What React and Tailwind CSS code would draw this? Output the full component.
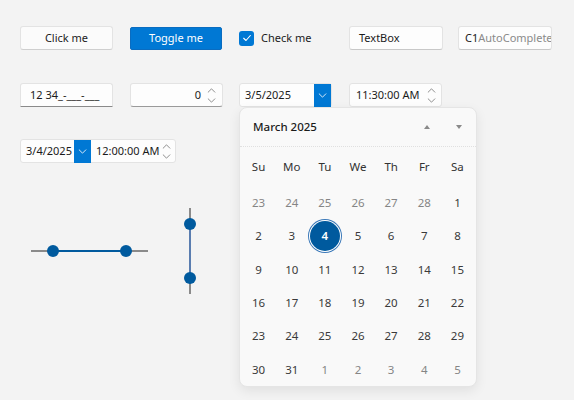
import React from 'react';

const font = "font-['Segoe_UI','Noto_Sans',sans-serif]";

function ChevronDown({ className = '' }) {
  return (
    <svg viewBox="0 0 10 6" className={className} fill="none" stroke="currentColor" strokeWidth="1" strokeLinecap="round" strokeLinejoin="round">
      <path d="M1 1 L5 5 L9 1" />
    </svg>
  );
}

function Spinner() {
  return (
    <div className="flex flex-col items-center justify-center gap-[5px] text-[#7a7a7a]">
      <svg viewBox="0 0 10 6" className="w-[9px] h-[5px]" fill="none" stroke="currentColor" strokeWidth="1" strokeLinecap="round">
        <path d="M1 5 L5 1 L9 5" />
      </svg>
      <svg viewBox="0 0 10 6" className="w-[9px] h-[5px]" fill="none" stroke="currentColor" strokeWidth="1" strokeLinecap="round">
        <path d="M1 1 L5 5 L9 1" />
      </svg>
    </div>
  );
}

const weeks = [
  [[23, 0], [24, 0], [25, 0], [26, 0], [27, 0], [28, 0], [1, 1]],
  [[2, 1], [3, 1], [4, 2], [5, 1], [6, 1], [7, 1], [8, 1]],
  [[9, 1], [10, 1], [11, 1], [12, 1], [13, 1], [14, 1], [15, 1]],
  [[16, 1], [17, 1], [18, 1], [19, 1], [20, 1], [21, 1], [22, 1]],
  [[23, 1], [24, 1], [25, 1], [26, 1], [27, 1], [28, 1], [29, 1]],
  [[30, 1], [31, 1], [1, 0], [2, 0], [3, 0], [4, 0], [5, 0]],
];

function Calendar() {
  return (
    <div className="absolute left-0 top-[24px] w-[238px] rounded-lg border border-[#e5e5e5] bg-[#f9f9f9] shadow-[0_4px_12px_rgba(0,0,0,0.08)] z-10">
      <div className="h-[39px] flex items-center pl-[13px] pr-[14px] border-b border-dotted border-[#e0e0e0]">
        <span className="text-[11.5px] font-medium text-[#1b1b1b]">March 2025</span>
        <div className="ml-auto flex items-center gap-[26px]">
          <span className="w-0 h-0 border-x-[3.5px] border-x-transparent border-b-[4px] border-b-[#8a8a8a]" />
          <span className="w-0 h-0 border-x-[3.5px] border-x-transparent border-t-[4px] border-t-[#8a8a8a]" />
        </div>
      </div>
      <div className="pl-[2px] pr-[2px]">
        <div className="grid grid-cols-7 h-[39px] items-center text-[11.5px] text-[#333]">
          {['Su', 'Mo', 'Tu', 'We', 'Th', 'Fr', 'Sa'].map((d) => (
            <span key={d} className="text-center">{d}</span>
          ))}
        </div>
        {weeks.map((w, i) => (
          <div key={i} className="grid grid-cols-7 h-[33.3px] items-center text-[11.5px]">
            {w.map(([n, t], j) => (
              <div key={j} className="flex justify-center">
                {t === 2 ? (
                  <span className="w-[30px] h-[30px] rounded-full bg-[#005a9e] text-white font-semibold flex items-center justify-center shadow-[0_0_0_1px_#ffffff,0_0_0_2px_#3a78b8]">{n}</span>
                ) : (
                  <span className={t === 1 ? 'text-[#3a3a3a]' : 'text-[#858585]'}>{n}</span>
                )}
              </div>
            ))}
          </div>
        ))}
      </div>
    </div>
  );
}

export default function App() {
  const box = 'h-[24px] bg-[#fdfdfd] border border-[#e3e3e3] rounded-[3px] flex items-center text-[11px] text-[#1b1b1b] whitespace-nowrap';
  return (
    <div className={`${font} w-[574px] h-[400px] bg-[#f3f3f3] overflow-hidden pl-[20px] pt-[26px] relative`}>
      {/* row 1 */}
      <div className="flex items-center h-[24px]">
        <button className="w-[93px] h-[24px] bg-[#fbfbfb] border border-[#e3e3e3] border-b-[#cfcfcf] rounded-[3px] text-[11px] text-[#1b1b1b]">Click me</button>
        <button className="ml-[17px] w-[92px] h-[23px] bg-[#0078d4] border border-[#0a6cc0] rounded-[2px] text-[11px] text-white">Toggle me</button>
        <label className="ml-[17px] flex items-center gap-[7px] text-[11px] text-[#1b1b1b] w-[93px]">
          <span className="w-[15px] h-[15px] rounded-[3px] bg-[#0078d4] flex items-center justify-center">
            <svg viewBox="0 0 12 12" className="w-[10px] h-[10px]" fill="none" stroke="white" strokeWidth="1.3" strokeLinecap="round" strokeLinejoin="round">
              <path d="M2 6.3 L4.8 9 L10 3" />
            </svg>
          </span>
          Check me
        </label>
        <div className={`${box} ml-[17px] w-[94px] px-[9px] border-b-[#c8c8c8]`}>TextBox</div>
        <div className={`${box} ml-[15px] w-[94px] pl-[6px] border-b-[#c8c8c8] overflow-hidden`}>
          C1<span className="text-[#8a8a8a]">AutoComplete</span>
        </div>
      </div>

      {/* row 2 */}
      <div className="flex items-center h-[24px] mt-[33px]">
        <div className={`${box} w-[93px] pl-[9px] border-b-[#8a8a8a] rounded-b-none`}>12 34_-___-___</div>
        <div className={`${box} ml-[17px] w-[93px] pr-[6px] justify-end gap-[6px] border-b-[#9a9a9a] border-b-dotted`}>
          <span>0</span>
          <Spinner />
        </div>
        <div className="relative ml-[16px]">
          <div className={`${box} w-[93px] pl-[5px] pr-0`}>
            <span>3/5/2025</span>
            <span className="ml-auto w-[17px] h-[23px] bg-[#0078d4] flex items-center justify-center text-white">
              <ChevronDown className="w-[9px] h-[5px]" />
            </span>
          </div>
          <Calendar />
        </div>
        <div className={`${box} ml-[17px] w-[93px] pl-[6px] pr-[5px]`}>
          <span>11:30:00 AM</span>
          <span className="ml-auto"><Spinner /></span>
        </div>
      </div>

      {/* row 3 */}
      <div className="flex items-center h-[24px] mt-[32px]">
        <div className={`${box} w-[156px] pl-[5px] pr-[4px]`}>
          <span>3/4/2025</span>
          <span className="ml-[2px] w-[17px] h-[23px] bg-[#0078d4] flex items-center justify-center text-white">
            <ChevronDown className="w-[9px] h-[5px]" />
          </span>
          <span className="ml-[5px]">12:00:00 AM</span>
          <span className="ml-auto"><Spinner /></span>
        </div>
      </div>

      {/* sliders */}
      <div className="flex items-center mt-[45px] h-[86px]">
        <div className="relative ml-[11px] w-[117px] h-[12px] flex items-center">
          <div className="w-full h-[2px] bg-[#8a8a8a]" />
          <div className="absolute left-[22px] w-[73px] h-[2px] bg-[#005a9e]" />
          <span className="absolute left-[16px] w-[12px] h-[12px] rounded-full bg-[#005a9e]" />
          <span className="absolute left-[89px] w-[12px] h-[12px] rounded-full bg-[#005a9e]" />
        </div>
        <div className="relative ml-[36px] w-[12px] h-[86px] flex justify-center">
          <div className="w-[2px] h-full bg-[#8a8a8a]" />
          <div className="absolute top-[16px] w-[2px] h-[54px] bg-[#5a7db0]" />
          <span className="absolute top-[10px] w-[12px] h-[12px] rounded-full bg-[#005a9e]" />
          <span className="absolute top-[64px] w-[12px] h-[12px] rounded-full bg-[#005a9e]" />
        </div>
      </div>
    </div>
  );
}
